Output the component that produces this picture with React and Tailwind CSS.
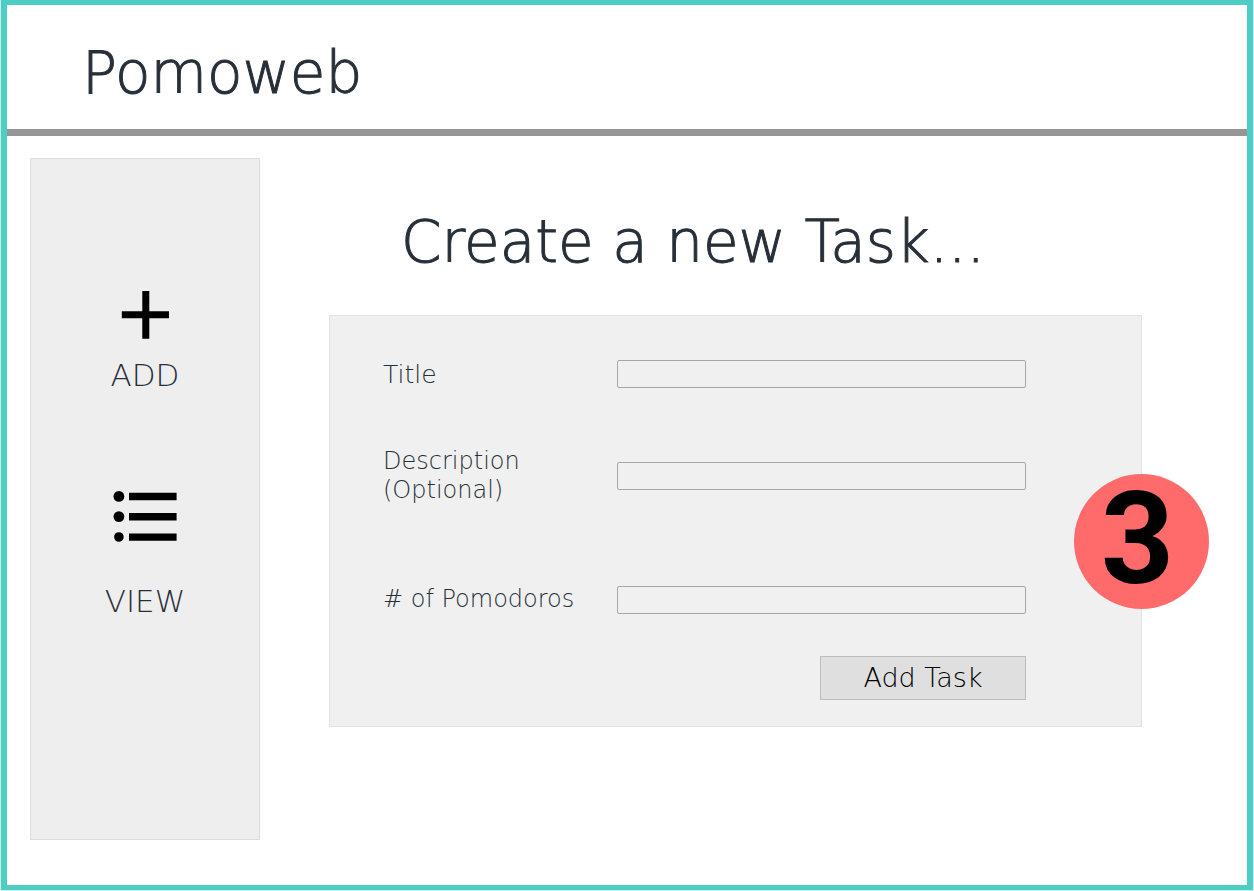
const fields = [
  { id: "title", lines: ["Title"], size: "text-[25px]" },
  { id: "description", lines: ["Description", "(Optional)"], size: "text-[24px]" },
  { id: "pomodoros", lines: ["# of Pomodoros"], size: "text-[24px]" },
];

function PlusIcon() {
  return (
    <svg viewBox="0 0 48 48" className="h-12 w-12" fill="#000" aria-hidden="true">
      <path d="M21.3 0h7v20.2H48.4v7H28.3V47.8h-7V27.2H.8v-7h20.5z" />
    </svg>
  );
}

function ListIcon() {
  return (
    <svg viewBox="0 0 64 52" className="h-[52px] w-16" fill="#000" aria-hidden="true">
      <circle cx="5.9" cy="5.4" r="5.4" />
      <circle cx="5.9" cy="25.6" r="5.4" />
      <circle cx="5.9" cy="46" r="4.8" />
      <path d="M16 1.8h47.6v7.4H16zM16 22h47.6v7.4H16zM16 42.4h47.6v7.4H16z" />
    </svg>
  );
}

export default function App() {
  return (
    <div className="flex min-h-screen flex-col bg-[#c9efec] px-px pb-px font-['DejaVu_Sans',sans-serif] font-extralight text-[#272f38]">
      <div className="flex flex-1 flex-col border-x-6 border-y-5 border-[#4ecdc4] bg-white">
        <header className="border-b-7 border-[#969696] pt-9 pb-6 pl-[75px]">
          <h1 className="text-[58px] leading-16 [-webkit-text-stroke:1px_#272f38]">Pomoweb</h1>
        </header>

        <div className="flex flex-1 items-stretch pt-[22px] pb-[45px] pl-[23px]">
          <nav className="flex w-[230px] shrink-0 flex-col items-center gap-[98px] border border-[#dcdcdc] bg-[#eeeeee] pt-33">
            <a href="#add" className="flex flex-col items-center gap-[18px] text-[31px] leading-9">
              <PlusIcon />
              ADD
            </a>
            <a href="#view" className="flex flex-col items-center gap-10 text-[31px] leading-9">
              <ListIcon />
              VIEW
            </a>
          </nav>

          <main className="flex-1 pt-[52px] pr-[105px] pl-[69px]">
            <h2 className="pl-[72px] text-[58px] leading-16 whitespace-nowrap [-webkit-text-stroke:1px_#272f38]">
              Create a new Task...
            </h2>

            <form className="relative mt-[41px] border border-[#e2e2e2] bg-[#f0f0f0] pt-[29px] pr-[115px] pb-[26px] pl-[53px]">
              <div className="grid grid-cols-[234px_1fr] grid-rows-[58px_145px_103px] items-center">
                {fields.map((field) => (
                  <div key={field.id} className="contents">
                    <label htmlFor={field.id} className={`leading-[29px] whitespace-nowrap ${field.size}`}>
                      {field.lines.map((line) => (
                        <span key={line} className="block">
                          {line}
                        </span>
                      ))}
                    </label>
                    <input
                      id={field.id}
                      name={field.id}
                      className="h-7 w-full rounded-xs border border-[#a6a6a6] bg-[#f0f0f0] px-2 text-base"
                    />
                  </div>
                ))}
              </div>
              <div className="mt-[5px] flex justify-end">
                <button type="button" className="h-11 w-[206px] border border-[#bcbcbc] bg-[#dfdfdf] text-[27px] text-black">
                  Add Task
                </button>
              </div>
              <div className="absolute top-[158px] -right-[68px] flex h-[135px] w-[135px] items-center justify-center rounded-full bg-[#ff6b6b] pr-2 pb-1.5 font-['Roboto',sans-serif] text-[128px] leading-none font-bold text-black">
                3
              </div>
            </form>
          </main>
        </div>
      </div>
    </div>
  );
}
